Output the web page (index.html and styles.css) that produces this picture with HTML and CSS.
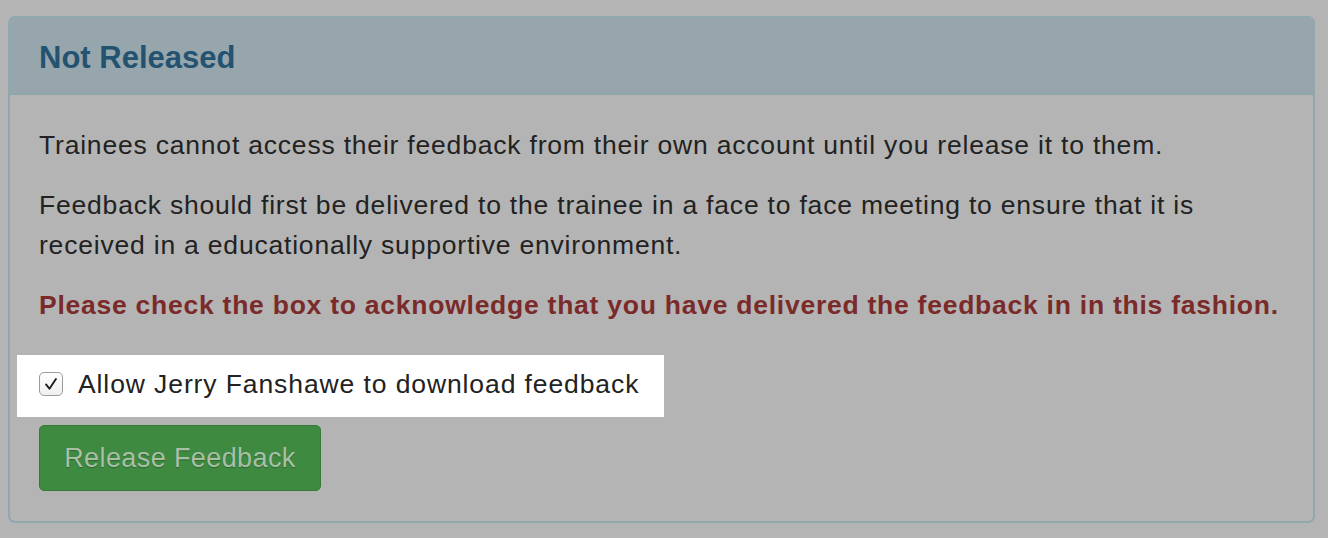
FILE: index.html
```
<!DOCTYPE html>
<html>
<head>
<meta charset="utf-8">
<link rel="stylesheet" href="styles.css">
</head>
<body>
<div class="panel">
  <div class="panel-heading">Not Released</div>
  <div class="panel-body">
    <p class="text">Trainees cannot access their feedback from their own account until you release it to them.</p>
    <p class="text">Feedback should first be delivered to the trainee in a face to face meeting to ensure that it is received in a educationally supportive environment.</p>
    <p class="text warn">Please check the box to acknowledge that you have delivered the feedback in in this fashion.</p>
    <div class="highlight">
      <label class="check">
        <span class="box"><svg width="18" height="18" viewBox="0 0 16 16"><path d="M3.6 8.4 L6.6 12.2 L12.4 3.6" fill="none" stroke="#1e1e1e" stroke-width="1.7" stroke-linecap="round" stroke-linejoin="round"/></svg></span>
        <span class="label-text">Allow Jerry Fanshawe to download feedback</span>
      </label>
    </div>
    <button class="btn">Release Feedback</button>
  </div>
</div>
</body>
</html>
```
FILE: styles.css
```
* { box-sizing: border-box; }
html, body { margin: 0; padding: 0; }
body {
  background: #b4b4b4;
  font-family: "Liberation Sans", Arial, sans-serif;
  color: #222;
  padding: 16px 13px 0 8px;
}
.panel {
  border: 2px solid #8fa8ae;
  border-radius: 7px;
  height: 507px;
  overflow: hidden;
}
.panel-heading {
  background: #97a6ac;
  border-bottom: 2px solid #8ea5ab;
  height: 77px;
  padding: 4px 0 0 29px;
  display: flex;
  align-items: center;
  font-size: 31px;
  font-weight: bold;
  color: #245371;
}
.panel-body {
  padding: 30px 20px 0 7px;
}
.text {
  margin: 0 0 20px 22px;
  font-size: 26.5px;
  letter-spacing: 0.8px;
  line-height: 40px;
  color: #222;
}
.warn {
  font-weight: bold;
  color: #7b2a2a;
  letter-spacing: 0.75px;
  margin-bottom: 30px;
}
.highlight {
  background: #fff;
  width: 647px;
  height: 62px;
  padding: 0 0 0 22px;
  display: flex;
  align-items: center;
}
.check {
  display: flex;
  align-items: center;
  gap: 15px;
  margin-top: -4px;
}
.box {
  width: 24px;
  height: 24px;
  border: 1px solid #9a9a9a;
  border-radius: 5px;
  background: linear-gradient(#fff, #f0f0f0);
  display: flex;
  align-items: center;
  justify-content: center;
}
.label-text {
  font-size: 26.5px;
  letter-spacing: 0.9px;
  line-height: 40px;
  color: #222;
}
.btn {
  margin: 8px 0 0 22px;
  width: 282px;
  height: 66px;
  background: #3d8a40;
  border: 1px solid #367a38;
  border-radius: 5px;
  font-family: "Liberation Sans", Arial, sans-serif;
  font-size: 27px;
  letter-spacing: 0.4px;
  color: #a8bfa6;
  text-shadow: 0 1px 1px rgba(0,0,0,0.25);
  padding: 0;
}
```
